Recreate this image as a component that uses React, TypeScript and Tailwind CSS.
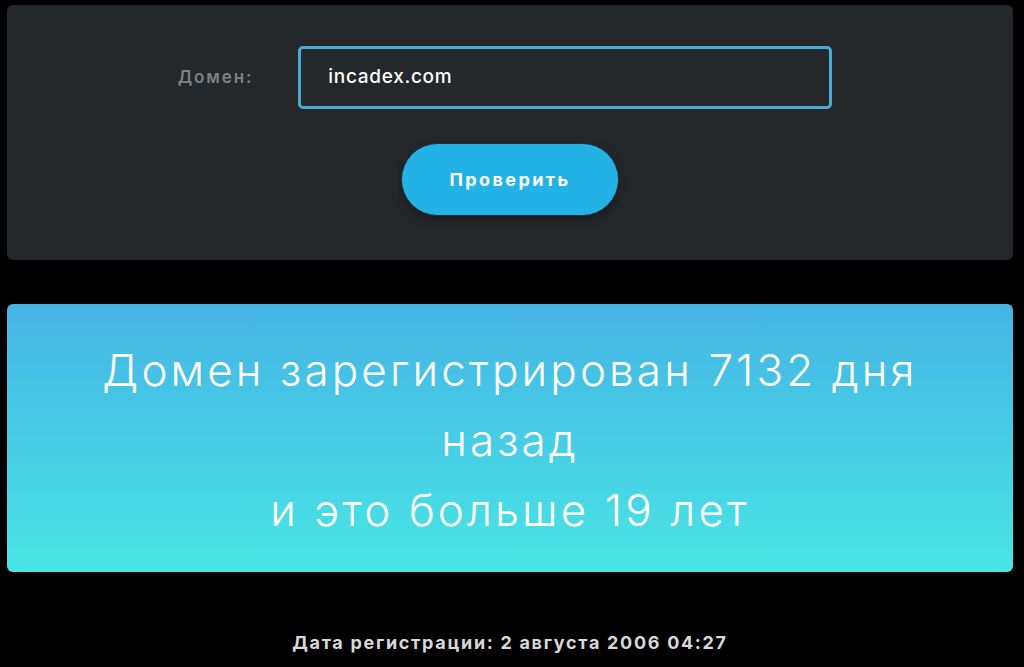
import React from "react";

export default function App() {
  return (
    <div className="min-h-screen bg-black pl-[7px] pr-[11px] pt-[5px] pb-4" style={{ fontFamily: "Inter, 'Noto Sans', sans-serif" }}>
      <div className="h-[255px] rounded-[6px] bg-[#25282b] pt-[41px]">
        <div className="flex items-center justify-center">
          <label className="mr-[45px] ml-[-10px] text-[17px] font-semibold tracking-[1.9px] text-[#7e8286]">Домен:</label>
          <div className="flex h-[63px] w-[534px] items-center rounded-[5px] border-[3px] border-[#4aaad6] bg-[#25282b] pl-[27px]">
            <span className="text-[19px] font-medium tracking-[0.7px] text-white">incadex.com</span>
          </div>
        </div>
        <div className="mt-[34px] flex justify-center">
          <button className="h-[73px] w-[218px] rounded-full border border-[#1d3440] bg-[#22b2e5] text-[18px] font-bold tracking-[2.4px] text-white shadow-[0_4px_10px_rgba(0,0,0,0.35)]">
            Проверить
          </button>
        </div>
      </div>
      <div className="mt-[44px] h-[268px] rounded-[6px] bg-gradient-to-b from-[#45b4e4] to-[#49e5e5] pt-[31px] text-center">
        <p className="text-[44px] font-light leading-[70px] tracking-[3.1px] text-white">
          Домен зарегистрирован 7132 дня
          <br />
          назад
          <br />
          и это больше 19 лет
        </p>
      </div>
      <p className="mt-[57px] text-center text-[18px] font-bold tracking-[1.7px] text-[#d8d8d8]">
        Дата регистрации: 2 августа 2006 04:27
      </p>
    </div>
  );
}
